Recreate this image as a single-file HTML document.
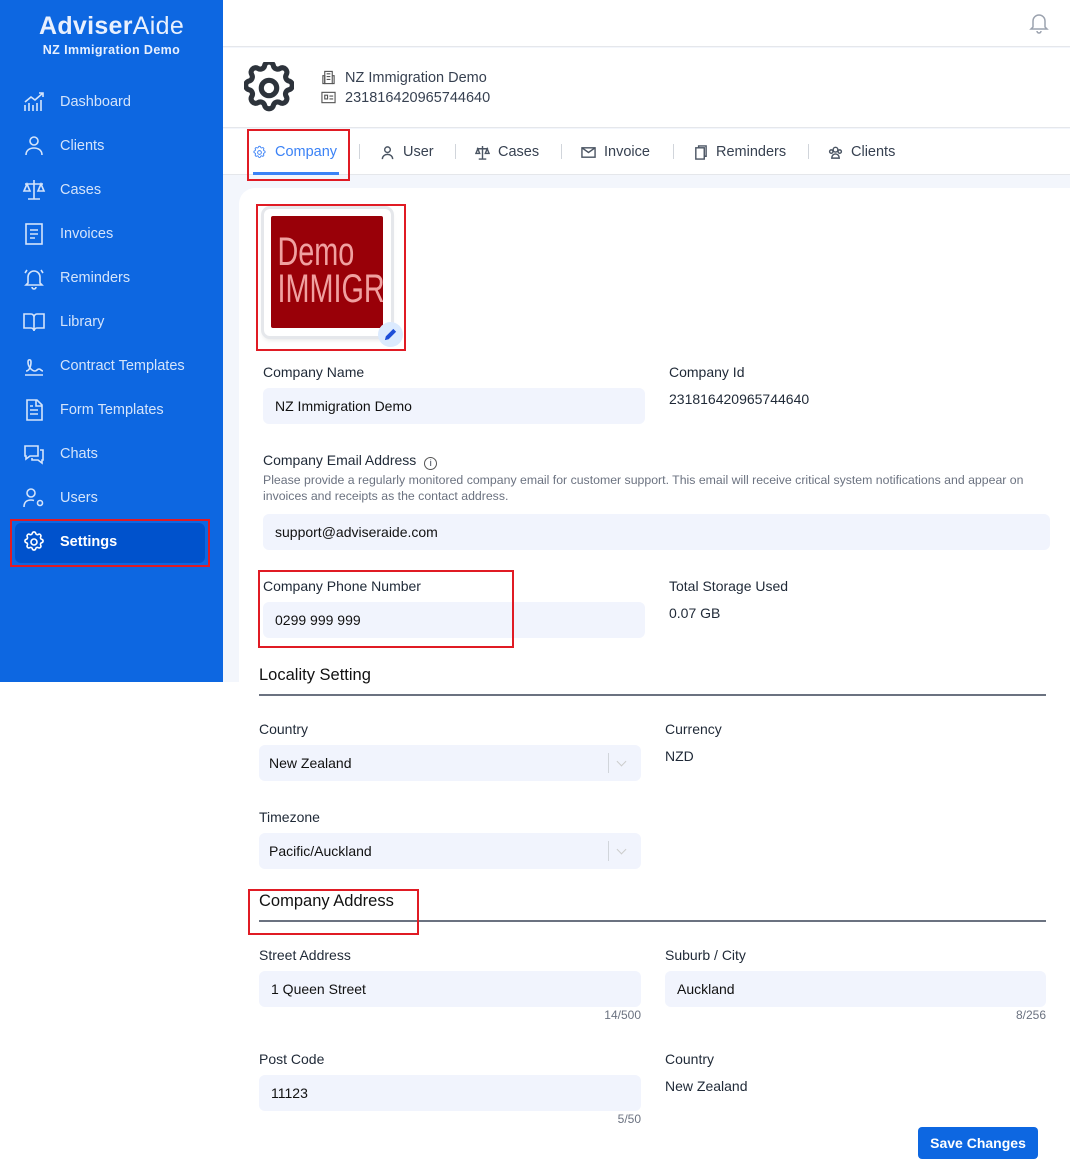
<!DOCTYPE html>
<html><head><meta charset="utf-8"><style>
*{box-sizing:border-box;margin:0;padding:0}
body{width:1070px;height:1176px;position:relative;background:#fff;font-family:"Liberation Sans",sans-serif;color:#1f2937;overflow:hidden}
.a{position:absolute}
.side{left:0;top:0;width:223px;height:682px;background:#0d67e1}
.nav{left:22px;color:#d4e4fb;font-size:14.5px;display:flex;align-items:center;gap:14px}
.nav svg{width:24px;height:24px;fill:none;stroke:#d4e4fb;stroke-width:1.6}
.lbl{font-size:14px;color:#1f2937}
.inp{background:#f1f4fd;border-radius:6px;height:36px;font-size:14px;padding:0 12px;display:flex;align-items:center;color:#111}
.red{border:2px solid #e01b24}
.tab{top:144px;font-size:14.5px;color:#374151;display:flex;align-items:center;gap:8px}
.tab svg{width:15px;height:15px;fill:none;stroke:#4b5563;stroke-width:1.5}
.sep{top:144px;width:1px;height:15px;background:#d1d5db}
.cnt{font-size:12px;color:#6b7280}
</style></head><body>
<div class="a" style="left:223px;top:0;width:847px;height:682px;background:#f3f6fc"></div>
<div class="a" style="left:223px;top:0;width:847px;height:47px;background:#fff;border-bottom:1px solid #e5e7eb"></div>
<svg class="a" style="left:1029px;top:12px" width="20" height="22" viewBox="0 0 20 22" fill="none" stroke="#9ca3af" stroke-width="1.5"><path d="M4 15V9a6 6 0 0112 0v6l2 2H2z"/><path d="M8 19a2 2 0 004 0"/></svg>
<div class="a" style="left:223px;top:48px;width:847px;height:80px;background:#fff;border-bottom:1px solid #e5e7eb"></div>
<svg class="a" style="left:244px;top:62px" width="50" height="52" viewBox="2.3 2.3 19.4 19.4" fill="none" stroke="#2d333b" stroke-width="2"><path d="M10.3 3.3c.4-1.8 3-1.8 3.4 0a1.7 1.7 0 002.6 1.1c1.5-.9 3.3.8 2.4 2.4a1.7 1.7 0 001 2.5c1.8.4 1.8 3 0 3.4a1.7 1.7 0 00-1 2.6c.9 1.5-.9 3.3-2.4 2.4a1.7 1.7 0 00-2.6 1c-.4 1.8-3 1.8-3.4 0a1.7 1.7 0 00-2.6-1c-1.5.9-3.3-.9-2.4-2.4a1.7 1.7 0 00-1-2.6c-1.8-.4-1.8-3 0-3.4a1.7 1.7 0 001-2.5c-.9-1.6.9-3.3 2.4-2.4a1.7 1.7 0 002.6-1.1z"/><circle cx="12" cy="12" r="3"/></svg>
<svg class="a" style="left:321px;top:70px" width="15" height="15" viewBox="0 0 16 16" fill="none" stroke="#555" stroke-width="1.2"><rect x="4" y="1.5" width="8" height="13"/><path d="M2 6h2v8.5H2zM12 6h2v8.5h-2M6 4h4M6 7h4M6 10h4"/></svg>
<div class="a" style="left:345px;top:70px;font-size:14.5px;color:#374151">NZ Immigration Demo</div>
<svg class="a" style="left:321px;top:91px" width="15" height="13" viewBox="0 0 16 13" fill="none" stroke="#555" stroke-width="1.2"><rect x="1" y="1" width="14" height="11"/><path d="M4 4h3v4H4zM9 5h4M9 8h4"/></svg>
<div class="a" style="left:345px;top:90px;font-size:14.5px;color:#374151">231816420965744640</div>
<div class="a" style="left:223px;top:129px;width:847px;height:46px;background:#fff;border-bottom:1px solid #e5e7eb"></div>
<div class="a tab" style="left:252px;color:#3b82f6"><svg viewBox="0 0 24 24" style="stroke:#3b82f6"><circle cx="12" cy="12" r="3"/><path d="M10.3 3.3c.4-1.8 3-1.8 3.4 0a1.7 1.7 0 002.6 1.1c1.5-.9 3.3.8 2.4 2.4a1.7 1.7 0 001 2.5c1.8.4 1.8 3 0 3.4a1.7 1.7 0 00-1 2.6c.9 1.5-.9 3.3-2.4 2.4a1.7 1.7 0 00-2.6 1c-.4 1.8-3 1.8-3.4 0a1.7 1.7 0 00-2.6-1c-1.5.9-3.3-.9-2.4-2.4a1.7 1.7 0 00-1-2.6c-1.8-.4-1.8-3 0-3.4a1.7 1.7 0 001-2.5c-.9-1.6.9-3.3 2.4-2.4a1.7 1.7 0 002.6-1.1z"/></svg>Company</div>
<div class="a" style="left:253px;top:172px;width:86px;height:3px;background:#3b82f6"></div>
<div class="a red" style="left:247px;top:129px;width:103px;height:52px"></div>
<div class="a sep" style="left:359px"></div>
<div class="a tab" style="left:380px"><svg viewBox="0 0 16 16"><circle cx="8" cy="5" r="3"/><path d="M2.5 15c0-3 2.5-5 5.5-5s5.5 2 5.5 5"/></svg>User</div>
<div class="a sep" style="left:455px"></div>
<div class="a tab" style="left:475px"><svg viewBox="0 0 16 16"><path d="M8 1v14M4 15h8M2 4h12M3 4l-2 5h4zM13 4l-2 5h4z"/></svg>Cases</div>
<div class="a sep" style="left:561px"></div>
<div class="a tab" style="left:581px"><svg viewBox="0 0 16 16"><rect x="1" y="3" width="14" height="10"/><path d="M1 3l7 5 7-5"/></svg>Invoice</div>
<div class="a sep" style="left:673px"></div>
<div class="a tab" style="left:693px"><svg viewBox="0 0 16 16"><rect x="3" y="3" width="9" height="12"/><path d="M6 3V1h8v11h-2"/></svg>Reminders</div>
<div class="a sep" style="left:808px"></div>
<div class="a tab" style="left:828px"><svg viewBox="0 0 16 16"><circle cx="8" cy="5" r="2.5"/><circle cx="3.5" cy="7" r="1.8"/><circle cx="12.5" cy="7" r="1.8"/><path d="M4 14c0-3 2-4.5 4-4.5s4 1.5 4 4.5z"/></svg>Clients</div>

<div class="a" style="left:239px;top:188px;width:831px;height:988px;background:#fff;border-radius:16px 0 0 0"></div>

<!-- sidebar -->
<div class="a side"></div>
<div class="a" style="left:0;top:12px;width:223px;text-align:center;color:#e8f0fe;font-size:25px;font-weight:bold;letter-spacing:.3px">Adviser<span style="font-weight:normal">Aide</span></div>
<div class="a" style="left:0;top:43px;width:223px;text-align:center;color:#e8f0fe;font-size:12.5px;font-weight:bold;letter-spacing:.4px">NZ Immigration Demo</div>
<div class="a nav" style="top:90px"><svg viewBox="0 0 24 24"><path d="M3 21v-6M7 21v-8M11 21v-6M15 21v-8M19 21V10M3 12l6-5 4 3 8-7M17 3h4v4"/></svg>Dashboard</div>
<div class="a nav" style="top:134px"><svg viewBox="0 0 24 24"><circle cx="12" cy="7" r="4"/><path d="M4 21c0-5 4-7 8-7s8 2 8 7"/></svg>Clients</div>
<div class="a nav" style="top:178px"><svg viewBox="0 0 24 24"><path d="M12 2v19M6 21h12M3 6h18M5 6l-3 7h6zM19 6l-3 7h6z"/></svg>Cases</div>
<div class="a nav" style="top:222px"><svg viewBox="0 0 24 24"><rect x="4" y="2" width="16" height="20"/><path d="M8 8h8M8 12h8M8 16h5"/></svg>Invoices</div>
<div class="a nav" style="top:266px"><svg viewBox="0 0 24 24"><path d="M6 17V11a6 6 0 0112 0v6l2 2H4zM10 21a2 2 0 004 0M3 7l2-3M21 7l-2-3"/></svg>Reminders</div>
<div class="a nav" style="top:310px"><svg viewBox="0 0 24 24"><path d="M2 4h7a3 3 0 013 3v14a3 3 0 00-3-3H2zM22 4h-7a3 3 0 00-3 3v14a3 3 0 013-3h7z"/></svg>Library</div>
<div class="a nav" style="top:354px"><svg viewBox="0 0 24 24"><path d="M3 21h18M4 17c3 0 5-4 5-9 0-3-3-3-3 0 0 5 4 9 7 9 2 0 2-2 4-2s2 2 4 2"/></svg>Contract Templates</div>
<div class="a nav" style="top:398px"><svg viewBox="0 0 24 24"><path d="M5 2h10l5 5v15H5zM14 2v6h6M8 12h8M8 16h8M8 8h3"/></svg>Form Templates</div>
<div class="a nav" style="top:442px"><svg viewBox="0 0 24 24"><path d="M3 4h13v10H8l-4 3v-3H3zM18 8h3v10h-1v3l-4-3h-6v-2"/></svg>Chats</div>
<div class="a nav" style="top:486px"><svg viewBox="0 0 24 24"><circle cx="9" cy="7" r="4"/><path d="M2 21c0-5 3-7 7-7 1 0 2 .2 3 .5"/><circle cx="18" cy="17" r="2.5"/></svg>Users</div>
<div class="a" style="left:15px;top:523px;width:190px;height:40px;background:#0052cc;border-radius:6px"></div>
<div class="a nav" style="top:530px;color:#fff;font-weight:bold"><svg viewBox="0 0 24 24" style="stroke:#fff"><circle cx="12" cy="12" r="3"/><path d="M10.3 3.3c.4-1.8 3-1.8 3.4 0a1.7 1.7 0 002.6 1.1c1.5-.9 3.3.8 2.4 2.4a1.7 1.7 0 001 2.5c1.8.4 1.8 3 0 3.4a1.7 1.7 0 00-1 2.6c.9 1.5-.9 3.3-2.4 2.4a1.7 1.7 0 00-2.6 1c-.4 1.8-3 1.8-3.4 0a1.7 1.7 0 00-2.6-1c-1.5.9-3.3-.9-2.4-2.4a1.7 1.7 0 00-1-2.6c-1.8-.4-1.8-3 0-3.4a1.7 1.7 0 001-2.5c-.9-1.6.9-3.3 2.4-2.4a1.7 1.7 0 002.6-1.1z"/></svg>Settings</div>
<div class="a red" style="left:10px;top:519px;width:200px;height:48px"></div>

<!-- logo -->
<div class="a" style="left:264px;top:209px;width:127px;height:127px;background:#fff;border-radius:6px;box-shadow:0 0 0 3px #e5e7eb,0 3px 6px rgba(0,0,0,.15)"></div>
<div class="a" style="left:271px;top:216px;width:112px;height:112px;background:#990008;border-radius:2px;overflow:hidden">
<div style="color:#f0a0a0;font-family:'Liberation Sans Narrow','Liberation Sans',sans-serif;font-size:40px;line-height:37px;padding:18px 0 0 9px;white-space:nowrap;transform:scaleX(0.72);transform-origin:0 0">Demo<br>IMMIGRAT</div></div>
<div class="a" style="left:378px;top:322px;width:25px;height:25px;border-radius:50%;background:#dbeafe"></div>
<svg class="a" style="left:383px;top:327px" width="15" height="15" viewBox="0 0 16 16"><path d="M2 14l1-4 8-8 3 3-8 8z" fill="#1d4ed8"/></svg>
<div class="a red" style="left:256px;top:204px;width:150px;height:147px"></div>

<div class="a lbl" style="left:263px;top:364px">Company Name</div>
<div class="a inp" style="left:263px;top:388px;width:382px">NZ Immigration Demo</div>
<div class="a lbl" style="left:669px;top:364px">Company Id</div>
<div class="a" style="left:669px;top:391px;font-size:14px;color:#1f2937">231816420965744640</div>

<div class="a lbl" style="left:263px;top:452px">Company Email Address <span style="display:inline-block;width:13px;height:13px;border:1px solid #555;border-radius:50%;font-size:9px;text-align:center;line-height:11px;margin-left:4px;vertical-align:-1px">i</span></div>
<div class="a" style="left:263px;top:472px;width:782px;font-size:12.3px;line-height:16px;color:#6b7280">Please provide a regularly monitored company email for customer support. This email will receive critical system notifications and appear on invoices and receipts as the contact address.</div>
<div class="a inp" style="left:263px;top:514px;width:787px">support@adviseraide.com</div>

<div class="a lbl" style="left:263px;top:578px">Company Phone Number</div>
<div class="a inp" style="left:263px;top:602px;width:382px">0299 999 999</div>
<div class="a red" style="left:258px;top:570px;width:256px;height:78px"></div>
<div class="a lbl" style="left:669px;top:578px">Total Storage Used</div>
<div class="a" style="left:669px;top:605px;font-size:14px">0.07 GB</div>

<div class="a" style="left:259px;top:666px;font-size:16.5px;color:#111">Locality Setting</div>
<div class="a" style="left:259px;top:694px;width:787px;height:2px;background:#6b7280"></div>
<div class="a lbl" style="left:259px;top:721px">Country</div>
<div class="a inp" style="left:259px;top:745px;width:382px;padding-left:10px">New Zealand</div>
<div class="a" style="left:608px;top:753px;width:1px;height:20px;background:#d1d5db"></div>
<div class="a" style="left:618px;top:758px;width:7px;height:7px;border-right:1.3px solid #ccc;border-bottom:1.3px solid #ccc;transform:rotate(45deg)"></div>
<div class="a lbl" style="left:665px;top:721px">Currency</div>
<div class="a" style="left:665px;top:748px;font-size:14px">NZD</div>
<div class="a lbl" style="left:259px;top:809px">Timezone</div>
<div class="a inp" style="left:259px;top:833px;width:382px;padding-left:10px">Pacific/Auckland</div>
<div class="a" style="left:608px;top:841px;width:1px;height:20px;background:#d1d5db"></div>
<div class="a" style="left:618px;top:846px;width:7px;height:7px;border-right:1.3px solid #ccc;border-bottom:1.3px solid #ccc;transform:rotate(45deg)"></div>

<div class="a" style="left:259px;top:892px;font-size:16.5px;color:#111">Company Address</div>
<div class="a" style="left:259px;top:920px;width:787px;height:2px;background:#6b7280"></div>
<div class="a red" style="left:248px;top:889px;width:171px;height:46px"></div>
<div class="a lbl" style="left:259px;top:947px">Street Address</div>
<div class="a inp" style="left:259px;top:971px;width:382px">1 Queen Street</div>
<div class="a cnt" style="left:541px;top:1008px;width:100px;text-align:right">14/500</div>
<div class="a lbl" style="left:665px;top:947px">Suburb / City</div>
<div class="a inp" style="left:665px;top:971px;width:381px">Auckland</div>
<div class="a cnt" style="left:946px;top:1008px;width:100px;text-align:right">8/256</div>
<div class="a lbl" style="left:259px;top:1051px">Post Code</div>
<div class="a inp" style="left:259px;top:1075px;width:382px">11123</div>
<div class="a cnt" style="left:541px;top:1112px;width:100px;text-align:right">5/50</div>
<div class="a lbl" style="left:665px;top:1051px">Country</div>
<div class="a" style="left:665px;top:1078px;font-size:14px">New Zealand</div>
<div class="a" style="left:918px;top:1127px;width:120px;height:32px;background:#0d67e1;border-radius:4px;color:#fff;font-weight:bold;font-size:14px;text-align:center;line-height:32px">Save Changes</div>
</body></html>
